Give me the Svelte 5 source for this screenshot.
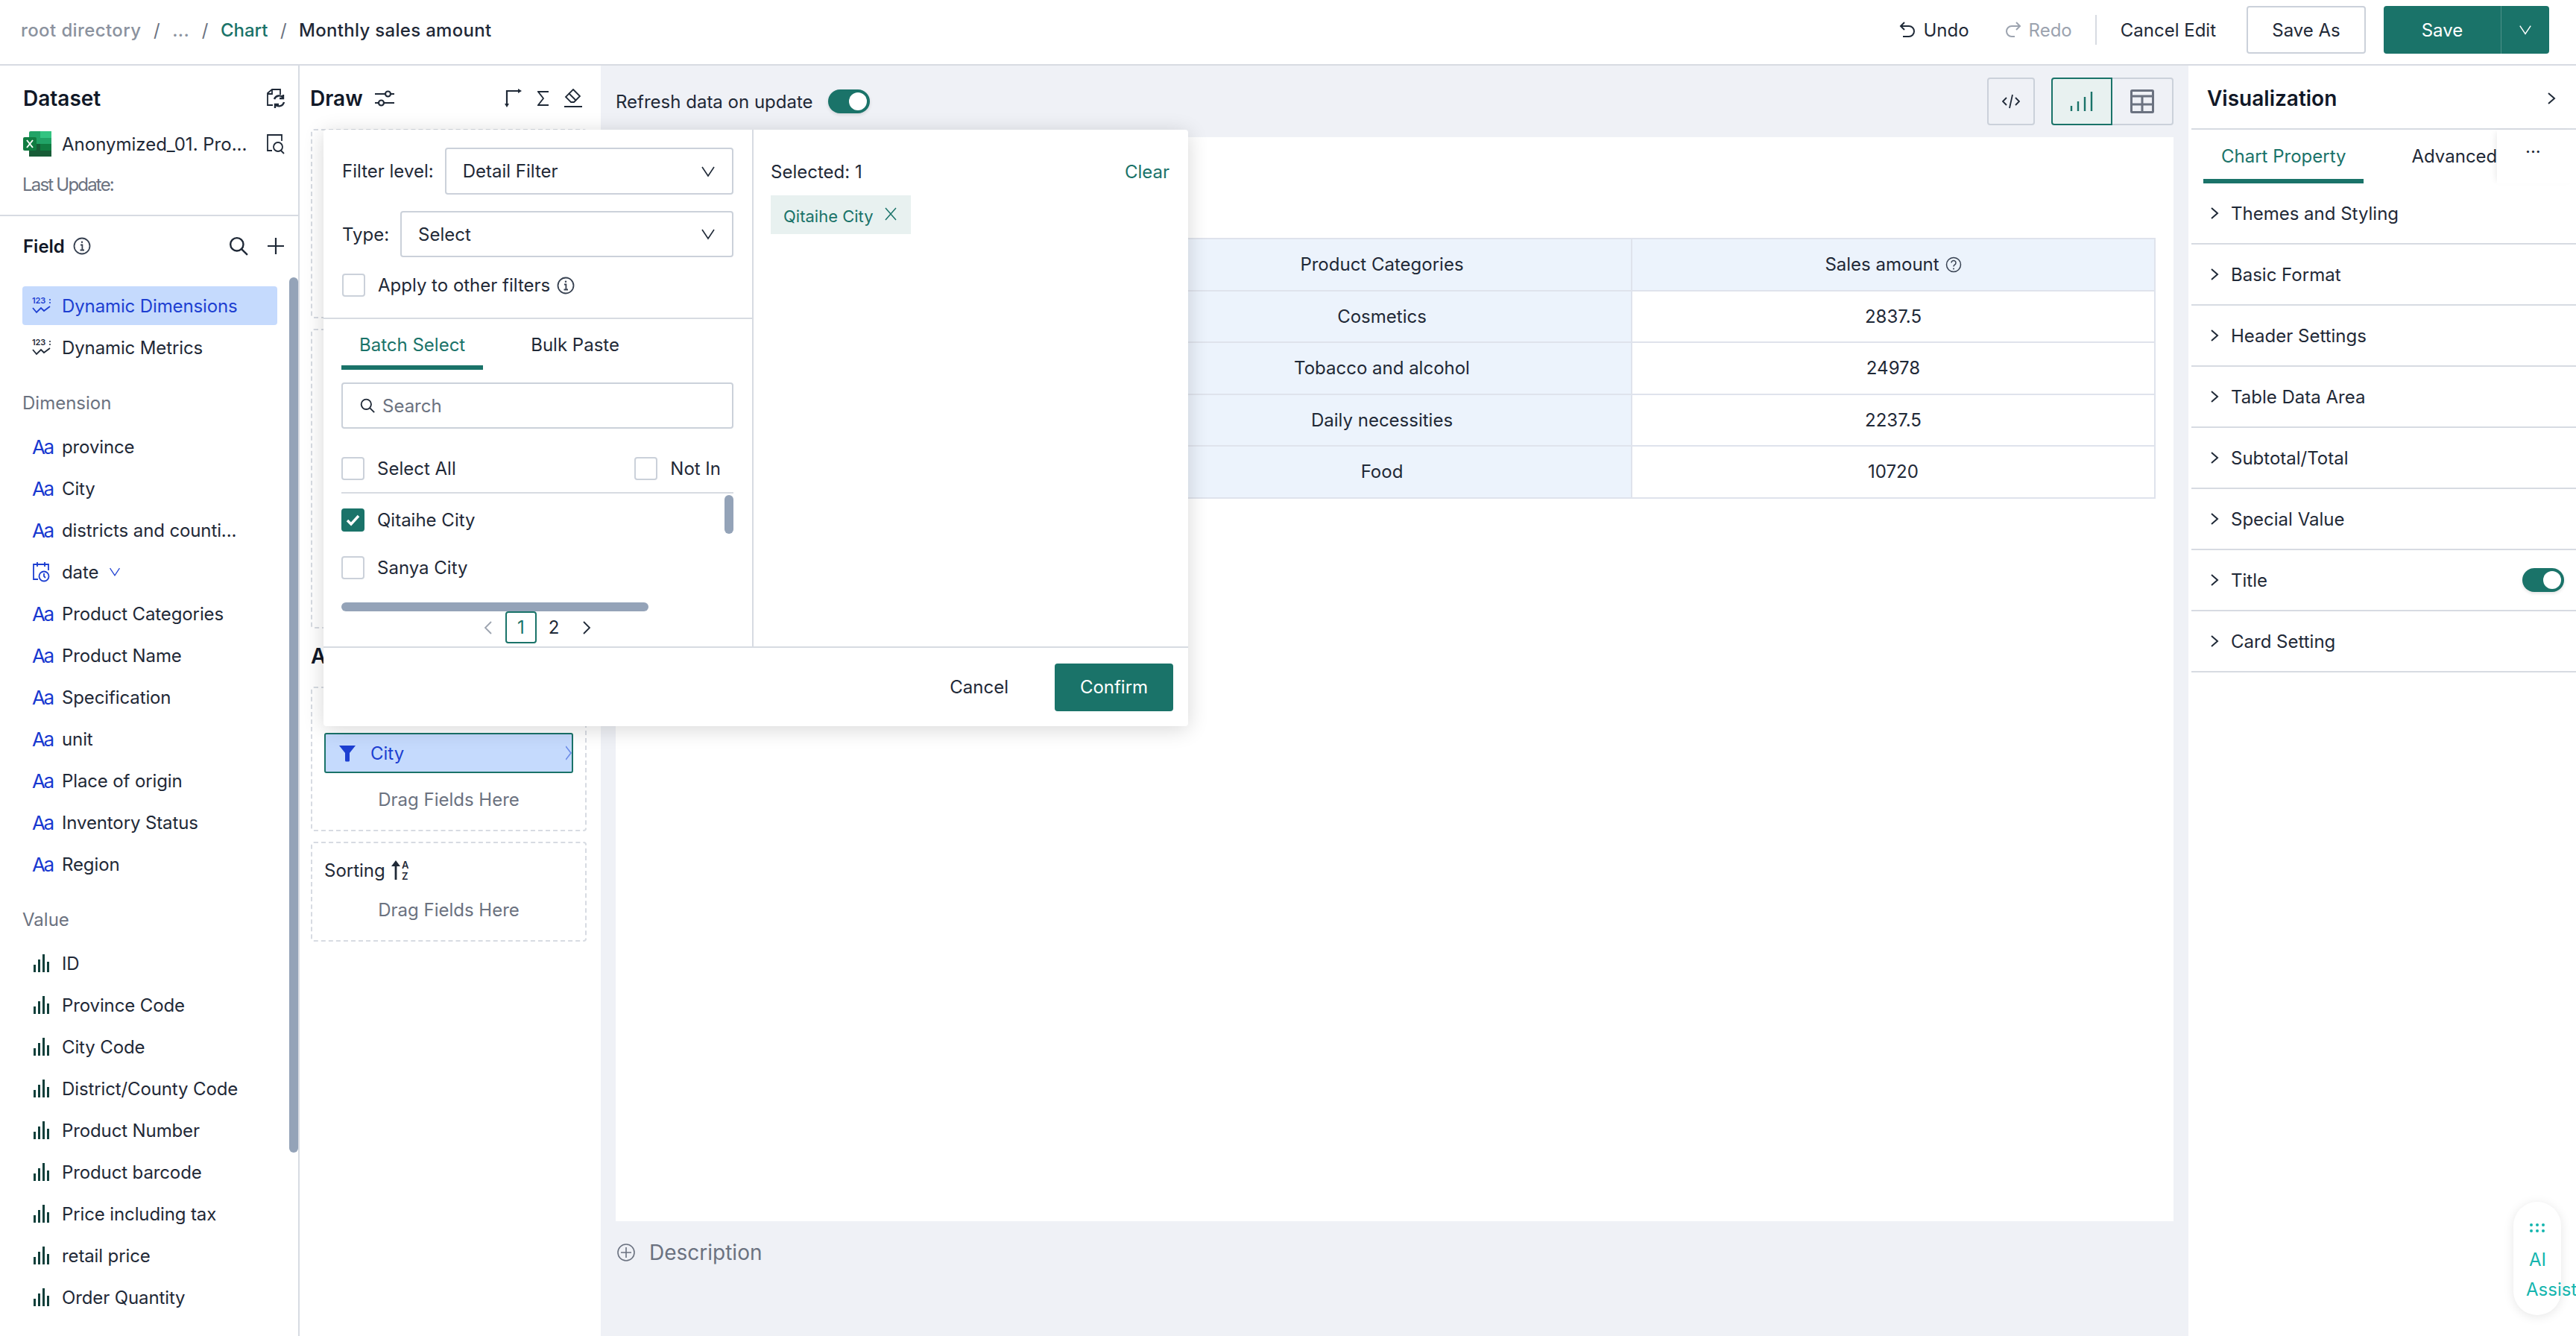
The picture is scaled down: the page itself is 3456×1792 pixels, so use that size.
<script>
  const dimensions = ["province", "City", "districts and counti...", "date", "Product Categories", "Product Name", "Specification", "unit", "Place of origin", "Inventory Status", "Region"];
  const values = ["ID", "Province Code", "City Code", "District/County Code", "Product Number", "Product barcode", "Price including tax", "retail price", "Order Quantity"];
  const sections = ["Themes and Styling", "Basic Format", "Header Settings", "Table Data Area", "Subtotal/Total", "Special Value", "Title", "Card Setting"];
  const rows = [["Cosmetics", "2837.5"], ["Tobacco and alcohol", "24978"], ["Daily necessities", "2237.5"], ["Food", "10720"]];
</script>

{#snippet chevronDown(size = 20)}
  <svg width={size} height={size} viewBox="0 0 20 20" fill="none" stroke="currentColor" stroke-width="1.6"><path d="M2 4l8 12 8-12" /></svg>
{/snippet}

{#snippet chevronRight()}
  <svg class="chev" width="12" height="18" viewBox="0 0 12 18" fill="none" stroke="currentColor" stroke-width="2"><path d="M2 2l8 7-8 7" /></svg>
{/snippet}

{#snippet info(size = 24)}
  <svg width={size} height={size} viewBox="0 0 24 24" fill="none" stroke="currentColor" stroke-width="1.8"><circle cx="12" cy="12" r="10.5" /><path d="M10 10.5h2.4v7M9.5 17.5h5.5" /><circle cx="12" cy="6.8" r="1.2" fill="currentColor" stroke="none" /></svg>
{/snippet}

{#snippet dynamicIcon()}
  <svg width="26" height="26" viewBox="0 0 26 26" fill="none" stroke="currentColor"><text x="0" y="10" font-size="11" font-family="Inter, sans-serif" font-weight="600" fill="currentColor" stroke="none">123</text><path d="M1 16l5 6 6-6 4 4 8-6" stroke-width="1.8" /><path d="M23 5h2M23 9h2" stroke-width="1.4" /></svg>
{/snippet}

{#snippet barsIcon()}
  <svg class="bars" width="22" height="24" viewBox="0 0 22 24" fill="currentColor"><rect x="0" y="14" width="3" height="10" /><rect x="6" y="7" width="3" height="17" /><rect x="12" y="0" width="3" height="24" /><rect x="18" y="10" width="3" height="14" /></svg>
{/snippet}

{#snippet searchIcon(size = 24)}
  <svg width={size} height={size} viewBox="0 0 24 24" fill="none" stroke="currentColor" stroke-width="2.2"><circle cx="10" cy="10" r="8" /><path d="M16 16l7 7" /></svg>
{/snippet}

{#snippet checkbox(checked = false)}
  <span class="box" class:checked>
    {#if checked}
      <svg width="21" height="21" viewBox="0 0 21 21" fill="none" stroke="#fff" stroke-width="3.4"><path d="M3 11l5 5 10-11" /></svg>
    {/if}
  </span>
{/snippet}

<div class="app">
  <header class="topbar">
    <nav class="crumbs">
      <span class="muted">root directory</span>
      <span class="slash">/</span>
      <span class="muted">...</span>
      <span class="slash">/</span>
      <span class="teal">Chart</span>
      <span class="slash">/</span>
      <span class="current">Monthly sales amount</span>
    </nav>
    <div class="actions">
      <span class="action undo">
        <svg width="22" height="24" viewBox="0 0 22 24" fill="none" stroke="currentColor" stroke-width="2"><path d="M7 2L2 7l5 5" /><path d="M2 7h11a7 7 0 0 1 0 14H5" /></svg>
        Undo
      </span>
      <span class="action redo">
        <svg width="22" height="24" viewBox="0 0 22 24" fill="none" stroke="currentColor" stroke-width="2"><path d="M15 2l5 5-5 5" /><path d="M20 7H9a7 7 0 0 0 0 14h4" /></svg>
        Redo
      </span>
      <span class="vline"></span>
      <span class="cancel-edit">Cancel Edit</span>
      <button class="btn save-as">Save As</button>
      <div class="save">
        <span class="save-main">Save</span>
        <span class="save-more">{@render chevronDown(18)}</span>
      </div>
    </div>
  </header>

  <div class="body">
    <aside class="dataset">
      <div class="dataset-top">
        <div class="title-row">
          <h2>Dataset</h2>
          <svg width="26" height="28" viewBox="0 0 26 28" fill="none" stroke="#1f2937" stroke-width="1.8"><path d="M9 23H2V7l6-5h11v7" /><path d="M8 2v6H2" /><path d="M11 15a7 7 0 0 1 12-2M23 9v5h-5" stroke-width="2.4" /><path d="M24 19a7 7 0 0 1-12 3M12 27v-5h5" stroke-width="2.4" /></svg>
        </div>
        <div class="file-row">
          <svg width="38" height="34" viewBox="0 0 38 34">
            <rect x="8" y="0" width="30" height="34" rx="2" fill="#21a366" />
            <rect x="23" y="0" width="15" height="9" fill="#33c481" />
            <rect x="8" y="17" width="15" height="17" fill="#185c37" />
            <rect x="23" y="17" width="15" height="9" fill="#107c41" />
            <rect x="23" y="26" width="15" height="8" fill="#185c37" />
            <rect x="0" y="8" width="18" height="18" rx="2" fill="#107c41" />
            <path d="M5 12l8 10M13 12l-8 10" stroke="#fff" stroke-width="2" />
          </svg>
          <span class="file-name">Anonymized_01. Pro...</span>
          <svg width="26" height="28" viewBox="0 0 26 28" fill="none" stroke="#1f2937" stroke-width="1.8"><path d="M8 23H2V2h19v8" /><circle cx="16" cy="18" r="6" /><path d="M20 23l4 4" /></svg>
        </div>
        <div class="last-update">Last Update:</div>
      </div>

      <div class="field-head">
        <span class="field-title">Field</span>
        <span class="field-info">{@render info(24)}</span>
        <span class="spacer"></span>
        {@render searchIcon(26)}
        <svg class="plus" width="24" height="24" viewBox="0 0 24 24" stroke="#1f2937" stroke-width="2.2"><path d="M12 1v22M1 12h22" /></svg>
      </div>

      <div class="field-row active"><span class="ficon">{@render dynamicIcon()}</span>Dynamic Dimensions</div>
      <div class="field-row"><span class="ficon">{@render dynamicIcon()}</span>Dynamic Metrics</div>

      <div class="group-label">Dimension</div>
      {#each dimensions as name}
        <div class="field-row">
          <span class="ficon aa">
            {#if name === "date"}
              <svg width="24" height="28" viewBox="0 0 24 28" fill="none" stroke="#1d3fd1" stroke-width="1.8"><path d="M8 24H2V4h20v8" /><path d="M7 1v6M17 1v6" /><circle cx="16" cy="20" r="6.5" /><path d="M16 16v4l2 2" /></svg>
            {:else}
              Aa
            {/if}
          </span>
          {name}
          {#if name === "date"}
            <span class="date-caret">{@render chevronDown(16)}</span>
          {/if}
        </div>
      {/each}

      <div class="group-label">Value</div>
      {#each values as name}
        <div class="field-row"><span class="ficon">{@render barsIcon()}</span>{name}</div>
      {/each}

      <div class="side-scroll"></div>
    </aside>

    <section class="draw">
      <div class="draw-head">
        <h2>Draw</h2>
        <svg class="tune" width="28" height="24" viewBox="0 0 28 24" fill="none" stroke="#1f2937" stroke-width="2.2"><path d="M1 6h14M22 6h5M1 18h5M13 18h14" /><circle cx="18.500" cy="6" r="3.500" /><circle cx="9.500" cy="18" r="3.500" /></svg>
        <span class="spacer"></span>
        <svg width="24" height="26" viewBox="0 0 24 26" fill="none" stroke="#1f2937" stroke-width="2.200"><path d="M3 22V3h16" /><path d="M0 20l3 5 3-5z" fill="#1f2937" stroke="none" /><path d="M18 0l5 3-5 3z" fill="#1f2937" stroke="none" /></svg>
        <svg class="sigma" width="16" height="22" viewBox="0 0 16 22" fill="none" stroke="#1f2937" stroke-width="1.800"><path d="M15 2H1l7 9-7 9h14" /></svg>
        <svg class="erase" width="26" height="26" viewBox="0 0 26 26" fill="none" stroke="#1f2937" stroke-width="1.800"><path d="M13 1l9 9-8 8h-4l-7-7z" /><path d="M7 6l10 10" /><path d="M1 24h24" stroke-width="2" /></svg>
      </div>
      <div class="dash slot-a"></div>
      <div class="dash slot-b"></div>
      <h3 class="adv">Advanced</h3>
      <div class="dash slot-c">
        <div class="chip">
          <svg width="24" height="24" viewBox="0 0 24 24" fill="#1d3fd1"><path d="M1 2h22l-8 10v10a1.500 1.500 0 0 1-1.500 1.500h-3A1.500 1.500 0 0 1 9 22V12z" /></svg>
          <span>City</span>
          <svg class="chip-arrow" width="8" height="24" viewBox="0 0 8 24" fill="none" stroke="#6c8be8" stroke-width="1.600"><path d="M0 3l7 9-7 9" /></svg>
        </div>
        <div class="drag">Drag Fields Here</div>
      </div>
      <div class="dash slot-d">
        <div class="sort-label">
          Sorting
          <svg width="26" height="28" viewBox="0 0 26 28"><path d="M6 27V5" stroke="#1f2937" stroke-width="2.800" /><path d="M0 9l6-8 6 8z" fill="#1f2937" /><text x="14" y="12" font-size="13" font-family="Inter, sans-serif" font-weight="600" fill="#1f2937">A</text><text x="14" y="27" font-size="13" font-family="Inter, sans-serif" font-weight="600" fill="#1f2937">Z</text></svg>
        </div>
        <div class="drag">Drag Fields Here</div>
      </div>
    </section>

    <main class="canvas">
      <div class="canvas-bar">
        <span class="refresh">Refresh data on update</span>
        <span class="switch"></span>
        <span class="spacer"></span>
        <span class="tool code">
          <svg width="24" height="24" viewBox="0 0 24 24" fill="none" stroke="#1f2937" stroke-width="1.800"><path d="M6 7l-5 5 5 5M18 7l5 5-5 5M14 3l-4 18" /></svg>
        </span>
        <span class="tool chart">
          <svg width="32" height="26" viewBox="0 0 32 26" stroke="#1a7369" stroke-width="2.400"><path d="M2 26v-7M11 26V13M20 26V7M29 26V0" /></svg>
        </span>
        <span class="tool grid">
          <svg width="32" height="32" viewBox="0 0 32 32" fill="none" stroke="#6b7280" stroke-width="3"><rect x="1.500" y="1.500" width="29" height="29" rx="1" /><path d="M1 9h30M1 20h30M16 9v22" /></svg>
        </span>
      </div>

      <div class="card">
        <table>
          <colgroup><col class="c0" /><col class="c1" /><col class="c2" /></colgroup>
          <thead>
            <tr>
              <th></th>
              <th>Product Categories</th>
              <th>
                <span class="sales">
                  Sales amount
                  <svg width="22" height="22" viewBox="0 0 22 22" fill="none" stroke="#374151" stroke-width="1.500"><circle cx="11" cy="11" r="9.500" /><path d="M8 8.500a3 3 0 1 1 4.500 2.600c-1 .6-1.500 1-1.500 2.400" /><circle cx="11" cy="16.500" r="1" fill="#374151" stroke="none" /></svg>
                </span>
              </th>
            </tr>
          </thead>
          <tbody>
            {#each rows as r}
              <tr>
                <td class="tint"></td>
                <td class="tint">{r[0]}</td>
                <td>{r[1]}</td>
              </tr>
            {/each}
          </tbody>
        </table>
      </div>

      <div class="desc">
        <svg width="24" height="24" viewBox="0 0 24 24" fill="none" stroke="#6b7280" stroke-width="1.600"><circle cx="12" cy="12" r="11" /><path d="M12 5v14M5 12h14" /></svg>
        <span>Description</span>
      </div>
    </main>

    <aside class="props">
      <div class="props-head">
        <h2>Visualization</h2>
        {@render chevronRight()}
      </div>
      <div class="props-tabs">
        <span class="ptab on">Chart Property</span>
        <span class="ptab">Advanced</span>
        <span class="ptab-more">···</span>
      </div>
      {#each sections as s}
        <div class="sec">
          {@render chevronRight()}
          <span class="sec-name">{s}</span>
          {#if s === "Title"}
            <span class="switch right"></span>
          {/if}
        </div>
      {/each}
    </aside>
  </div>

  <div class="popover">
    <div class="pop-main">
      <div class="pop-left">
        <div class="pop-form">
          <div class="form-row level">
            <label for="lvl">Filter level:</label>
            <div class="select" id="lvl"><span>Detail Filter</span>{@render chevronDown(20)}</div>
          </div>
          <div class="form-row kind">
            <label for="typ">Type:</label>
            <div class="select" id="typ"><span>Select</span>{@render chevronDown(20)}</div>
          </div>
          <div class="check-row apply">
            {@render checkbox()}
            <span>Apply to other filters</span>
            <span class="apply-info">{@render info(24)}</span>
          </div>
        </div>

        <div class="pop-lower">
          <div class="pop-tabs">
            <span class="ftab on">Batch Select</span>
            <span class="ftab">Bulk Paste</span>
          </div>
          <div class="search">
            {@render searchIcon(20)}
            <span>Search</span>
          </div>
          <div class="all-row">
            <div class="check-row">{@render checkbox()}<span>Select All</span></div>
            <div class="check-row">{@render checkbox()}<span>Not In</span></div>
          </div>
          <div class="opts">
            <div class="check-row opt">{@render checkbox(true)}<span>Qitaihe City</span></div>
            <div class="check-row opt">{@render checkbox()}<span>Sanya City</span></div>
            <div class="v-thumb"></div>
          </div>
          <div class="h-thumb"></div>
          <div class="pager">
            <span class="pg dim"><svg width="12" height="20" viewBox="0 0 12 20" fill="none" stroke="currentColor" stroke-width="1.800"><path d="M10 2l-8 8 8 8" /></svg></span>
            <span class="pg cur">1</span>
            <span class="pg">2</span>
            <span class="pg"><svg width="12" height="20" viewBox="0 0 12 20" fill="none" stroke="currentColor" stroke-width="1.800"><path d="M2 2l8 8-8 8" /></svg></span>
          </div>
        </div>
      </div>

      <div class="pop-right">
        <div class="sel-head"><span>Selected: 1</span><span class="teal">Clear</span></div>
        <div class="tag">
          <span>Qitaihe City</span>
          <svg width="18" height="18" viewBox="0 0 18 18" stroke="currentColor" stroke-width="1.500"><path d="M2 1l14 16M16 1L2 17" /></svg>
        </div>
      </div>
    </div>
    <div class="pop-foot">
      <span class="pop-cancel">Cancel</span>
      <button class="confirm">Confirm</button>
    </div>
  </div>

  <div class="ai">
    <svg width="22" height="14" viewBox="0 0 22 14" fill="#14b5ae"><circle cx="3" cy="3" r="2" /><circle cx="11" cy="3" r="2" /><circle cx="19" cy="3" r="2" /><circle cx="3" cy="11" r="2" /><circle cx="11" cy="11" r="2" /><circle cx="19" cy="11" r="2" /></svg>
    <span class="ai-a">AI</span>
    <span class="ai-b">Assist</span>
  </div>
</div>

<style>
  :global(body) {
    margin: 0;
    background: #fff;
  }

  .app {
    position: relative;
    width: 3456px;
    height: 1792px;
    overflow: hidden;
    display: flex;
    flex-direction: column;
    font-family: Inter, "Liberation Sans", sans-serif;
    font-size: 24px;
    color: #1f2937;
    background: #fff;
  }

  h2 {
    margin: 0;
    font-size: 28px;
    line-height: 32px;
    font-weight: 600;
    color: #111827;
  }

  .spacer {
    flex: 1;
  }

  .teal {
    color: #1a7369;
  }

  /* top bar */
  .topbar {
    height: 88px;
    flex: none;
    box-sizing: border-box;
    border-bottom: 2px solid #d7dbe2;
    display: flex;
    align-items: center;
    justify-content: space-between;
    padding: 0 36px 6px 28px;
  }

  .crumbs {
    display: flex;
    align-items: center;
    font-weight: 500;
  }

  .muted {
    color: #8b929e;
    letter-spacing: 0.4px;
  }

  .slash {
    color: #6b7280;
    margin: 0 16.5px;
    font-weight: 400;
  }

  .current {
    color: #1f2937;
    letter-spacing: 0.3px;
  }

  .actions {
    display: flex;
    align-items: center;
  }

  .action {
    display: flex;
    align-items: center;
    gap: 10px;
  }

  .redo {
    color: #9ca3af;
    margin-left: 48px;
  }

  .vline {
    width: 2px;
    height: 40px;
    background: #d7dbe2;
    margin: 0 32px 0 31px;
  }

  .btn {
    font: inherit;
    color: inherit;
    background: #fff;
    border: 2px solid #cbd1da;
    border-radius: 4px;
    height: 64px;
    width: 160px;
    padding: 0;
  }

  .save-as {
    margin-left: 41px;
  }

  .save {
    margin-left: 24px;
    width: 222px;
    height: 64px;
    display: flex;
    background: #1a7369;
    color: #fff;
    border-radius: 4px;
  }

  .save-main {
    width: 157px;
    display: flex;
    align-items: center;
    justify-content: center;
    border-right: 1px solid #4d9189;
  }

  .save-more {
    flex: 1;
    display: flex;
    align-items: center;
    justify-content: center;
  }

  .body {
    flex: 1;
    display: flex;
    min-height: 0;
  }

  /* dataset column */
  .dataset {
    position: relative;
    width: 402px;
    flex: none;
    box-sizing: border-box;
    border-right: 2px solid #d7dbe2;
    overflow: hidden;
  }

  .dataset-top {
    height: 202px;
    box-sizing: border-box;
    padding: 28px 17px 0 31px;
    border-bottom: 2px solid #d7dbe2;
  }

  .title-row,
  .file-row {
    display: flex;
    align-items: center;
    justify-content: space-between;
  }

  .file-row {
    margin-top: 24px;
    height: 42px;
  }

  .file-name {
    flex: 1;
    margin-left: 14px;
    white-space: nowrap;
  }

  .last-update {
    margin-top: 18px;
    line-height: 32px;
    color: #6b7280;
    margin-left: -1px;
    letter-spacing: -1.8px;
  }

  .field-head {
    display: flex;
    align-items: center;
    height: 32px;
    padding: 24px 18px 0 31px;
    margin-bottom: 38px;
  }

  .field-title {
    font-weight: 600;
    font-size: 24px;
    color: #111827;
  }

  .field-info {
    display: flex;
    margin-left: 11px;
    color: #374151;
  }

  .plus {
    margin-left: 25px;
  }

  .field-row {
    display: flex;
    align-items: center;
    width: 342px;
    height: 52px;
    margin: 0 0 4px 30px;
    box-sizing: border-box;
    padding-left: 13px;
    border-radius: 4px;
    white-space: nowrap;
    letter-spacing: -0.12px;
  }

  .field-row.active {
    background: #c5dafd;
    color: #1d3fd1;
  }

  .ficon {
    width: 40px;
    flex: none;
    display: flex;
    align-items: center;
  }

  .aa {
    color: #1738d0;
    font-size: 26px;
    font-weight: 400;
    letter-spacing: -2.5px;
  }

  .bars {
    color: #0f3f3a;
    margin-left: 2px;
  }

  .date-caret {
    display: flex;
    color: #1d3fd1;
    margin-left: 14px;
  }

  .group-label {
    color: #6b7280;
    line-height: 34px;
    margin: 32px 0 15px 30px;
  }

  .side-scroll {
    position: absolute;
    top: 284px;
    right: 0;
    width: 12px;
    height: 1174px;
    border-radius: 6px;
    background: #94a3b8;
  }

  /* draw column */
  .draw {
    width: 404px;
    flex: none;
    box-sizing: border-box;
    padding: 28px 0 0 15px;
  }

  .draw-head {
    display: flex;
    align-items: center;
    height: 32px;
    padding-right: 24px;
    margin-left: -1px;
  }

  .tune {
    margin-left: 15px;
  }

  .sigma {
    margin-left: 20px;
  }

  .erase {
    margin-left: 19px;
  }

  .dash {
    width: 370px;
    box-sizing: border-box;
    border: 2px dashed #d7dbe2;
    border-radius: 4px;
  }

  .slot-a {
    margin-top: 25px;
    height: 254px;
  }

  .slot-b {
    margin-top: 14px;
    height: 402px;
  }

  .adv {
    margin: 21px 0 0;
    font-size: 28px;
    line-height: 32px;
    font-weight: 600;
    color: #111827;
  }

  .slot-c {
    margin-top: 25px;
    height: 194px;
    padding: 60px 16px 0;
  }

  .slot-d {
    margin-top: 14px;
    height: 134px;
    padding: 20px 16px 0;
  }

  .slot-d .drag {
    margin-top: 22px;
  }

  .chip {
    width: 334px;
    height: 54px;
    box-sizing: border-box;
    border: 2px solid #1a7369;
    border-radius: 3px;
    background: #c5dafd;
    color: #1d3fd1;
    display: flex;
    align-items: center;
    padding-left: 17px;
    gap: 19px;
  }

  .chip span {
    flex: 1;
  }

  .drag {
    text-align: center;
    color: #6b7280;
    line-height: 32px;
    margin-top: 20px;
  }

  .sort-label {
    display: flex;
    align-items: center;
    gap: 8px;
    height: 32px;
  }

  /* canvas */
  .canvas {
    flex: 1;
    background: #eff1f6;
    padding: 0 20px;
    min-width: 0;
  }

  .canvas-bar {
    height: 96px;
    display: flex;
    align-items: center;
  }

  .switch {
    display: inline-block;
    position: relative;
    width: 56px;
    height: 32px;
    border-radius: 16px;
    background: #1a7369;
    box-shadow: 0 2px 4px rgba(0, 0, 0, 0.12);
  }

  .switch::after {
    content: "";
    position: absolute;
    right: 4px;
    top: 4px;
    width: 24px;
    height: 24px;
    border-radius: 50%;
    background: #fff;
  }

  .canvas-bar .switch {
    margin-left: 20px;
  }

  .tool {
    height: 64px;
    box-sizing: border-box;
    display: flex;
    align-items: center;
    justify-content: center;
    border: 2px solid #cbd1da;
    border-radius: 4px;
  }

  .code {
    width: 64px;
    margin-right: 22px;
  }

  .chart {
    width: 82px;
    border-color: #1a7369;
    background: #e8f1f0;
    border-radius: 4px 0 0 4px;
  }

  .grid {
    width: 82px;
    border-left: none;
    border-radius: 0 4px 4px 0;
  }

  .card {
    height: 1454px;
    background: #fff;
    box-sizing: border-box;
    padding: 135px 24px 0 20px;
  }

  table {
    width: 100%;
    table-layout: fixed;
    border-collapse: collapse;
  }

  .c0 {
    width: 672px;
  }

  .c1 {
    width: 670px;
  }

  th,
  td {
    border: 2px solid #dfe3ec;
    height: 67.5px;
    padding: 0;
    text-align: center;
    font-weight: 400;
  }

  th,
  .tint {
    background: #ecf3fc;
  }

  .sales {
    display: inline-flex;
    align-items: center;
    gap: 8px;
  }

  .desc {
    display: flex;
    align-items: center;
    gap: 19px;
    height: 36px;
    margin: 24px 0 0 2px;
    color: #6b7280;
    font-size: 28px;
  }

  /* properties column */
  .props {
    width: 520px;
    flex: none;
    box-sizing: border-box;
    padding-left: 4px;
    overflow: hidden;
  }

  .props-head {
    height: 86px;
    box-sizing: border-box;
    border-bottom: 2px solid #d7dbe2;
    display: flex;
    align-items: center;
    justify-content: space-between;
    padding: 4px 27px 0 21px;
  }

  .props-tabs {
    height: 72px;
    display: flex;
    padding-left: 16px;
    position: relative;
    gap: 40px;
  }

  .ptab {
    line-height: 72px;
    height: 72px;
    box-sizing: border-box;
    padding: 0 24px;
    white-space: nowrap;
  }

  .ptab.on {
    color: #1a7369;
    border-bottom: 6px solid #1a7369;
  }

  .ptab-more {
    position: absolute;
    left: 410px;
    top: 0;
    width: 106px;
    padding-left: 38px;
    box-sizing: border-box;
    height: 72px;
    line-height: 60px;
    background: #fff;
    box-shadow: -6px 0 8px -4px rgba(0, 0, 0, 0.08);
  }

  .sec {
    height: 82px;
    box-sizing: border-box;
    border-bottom: 2px solid #d7dbe2;
    display: flex;
    align-items: center;
    padding: 0 16px 0 25px;
  }

  .sec-name {
    margin-left: 16px;
  }

  .chev {
    flex: none;
  }

  .switch.right {
    margin-left: auto;
  }

  /* filter popover */
  .popover {
    position: absolute;
    left: 434px;
    top: 174px;
    width: 1160px;
    height: 800px;
    background: #fff;
    border-radius: 4px;
    box-shadow: 0 4px 28px rgba(0, 0, 0, 0.16);
    display: flex;
    flex-direction: column;
  }

  .pop-main {
    height: 695px;
    flex: none;
    display: flex;
    box-sizing: border-box;
    border-bottom: 2px solid #d7dbe2;
  }

  .pop-left {
    width: 577px;
    flex: none;
    box-sizing: border-box;
    border-right: 2px solid #d7dbe2;
  }

  .pop-form {
    height: 254px;
    box-sizing: border-box;
    padding: 24px 25px 0 25px;
    border-bottom: 2px solid #d7dbe2;
  }

  .form-row {
    display: flex;
    align-items: center;
    gap: 15px;
  }

  .form-row.kind {
    margin-top: 22px;
  }

  .select {
    flex: 1;
    height: 62px;
    box-sizing: border-box;
    border: 2px solid #cbd1da;
    border-radius: 4px;
    display: flex;
    align-items: center;
    justify-content: space-between;
    padding: 0 22px;
  }

  .form-row.level .select {
    height: 63px;
  }

  .check-row {
    display: flex;
    align-items: center;
    gap: 17px;
  }

  .apply {
    margin-top: 22px;
  }

  .apply-info {
    display: flex;
    margin-left: -8px;
    color: #374151;
  }

  .box {
    width: 31px;
    height: 31px;
    box-sizing: border-box;
    flex: none;
    border: 2px solid #cbd1da;
    border-radius: 4px;
    display: flex;
    align-items: center;
    justify-content: center;
  }

  .box.checked {
    background: #1a7369;
    border-color: #1a7369;
  }

  .pop-lower {
    padding: 0 25px 0 24px;
  }

  .pop-tabs {
    display: flex;
    gap: 40px;
    height: 68px;
  }

  .ftab {
    height: 68px;
    box-sizing: border-box;
    padding: 17px 24px 0;
    line-height: 36px;
    white-space: nowrap;
  }

  .ftab.on {
    color: #1a7369;
    border-bottom: 6px solid #1a7369;
  }

  .search {
    margin-top: 17px;
    height: 62px;
    box-sizing: border-box;
    border: 2px solid #cbd1da;
    border-radius: 4px;
    display: flex;
    align-items: center;
    gap: 10px;
    padding-left: 23px;
    color: #6b7280;
  }

  .search svg {
    color: #1f2937;
  }

  .all-row {
    margin-top: 38px;
    display: flex;
    justify-content: space-between;
    padding-right: 17px;
    padding-bottom: 16px;
    border-bottom: 2px solid #d7dbe2;
  }

  .opts {
    position: relative;
    padding-top: 3px;
  }

  .opt {
    height: 64px;
  }

  .v-thumb {
    position: absolute;
    right: 0;
    top: 2px;
    width: 12px;
    height: 52px;
    border-radius: 6px;
    background: #94a3b8;
  }

  .h-thumb {
    margin-top: 15px;
    width: 412px;
    height: 12px;
    border-radius: 6px;
    background: #94a3b8;
  }

  .pager {
    display: flex;
    justify-content: center;
    gap: 2px;
  }

  .pg {
    width: 42px;
    height: 43px;
    box-sizing: border-box;
    display: flex;
    align-items: center;
    justify-content: center;
  }

  .pg.dim {
    color: #9ca3af;
  }

  .pg.cur {
    border: 2px solid #1a7369;
    border-radius: 4px;
    color: #1a7369;
  }

  .pop-right {
    flex: 1;
    padding: 41px 25px 0 23px;
  }

  .sel-head {
    display: flex;
    justify-content: space-between;
    line-height: 32px;
  }

  .tag {
    margin-top: 15px;
    width: 188px;
    height: 52px;
    box-sizing: border-box;
    background: #e8f1f0;
    color: #1a7369;
    display: flex;
    align-items: center;
    justify-content: space-between;
    padding: 4px 18px 0 17px;
    font-size: 22px;
    white-space: nowrap;
  }

  .tag svg {
    margin-top: -6px;
  }

  .pop-foot {
    flex: 1;
    display: flex;
    align-items: center;
    justify-content: flex-end;
    padding-right: 20px;
  }

  .pop-cancel {
    margin-right: 62px;
  }

  .confirm {
    width: 159px;
    height: 64px;
    border: none;
    border-radius: 4px;
    background: #1a7369;
    color: #fff;
    font: inherit;
    padding: 0;
  }

  /* AI assistant pill */
  .ai {
    position: absolute;
    left: 3372px;
    top: 1612px;
    width: 64px;
    height: 152px;
    border-radius: 32px;
    background: #fff;
    box-shadow: 0 2px 14px rgba(0, 0, 0, 0.1);
    color: #14b5ae;
    display: flex;
    flex-direction: column;
    padding-top: 28px;
    box-sizing: border-box;
  }

  .ai svg {
    margin-left: 21px;
  }

  .ai-a {
    margin: 16px 0 0 21px;
    line-height: 40px;
  }

  .ai-b {
    margin-left: 17px;
    line-height: 40px;
    white-space: nowrap;
  }
</style>
